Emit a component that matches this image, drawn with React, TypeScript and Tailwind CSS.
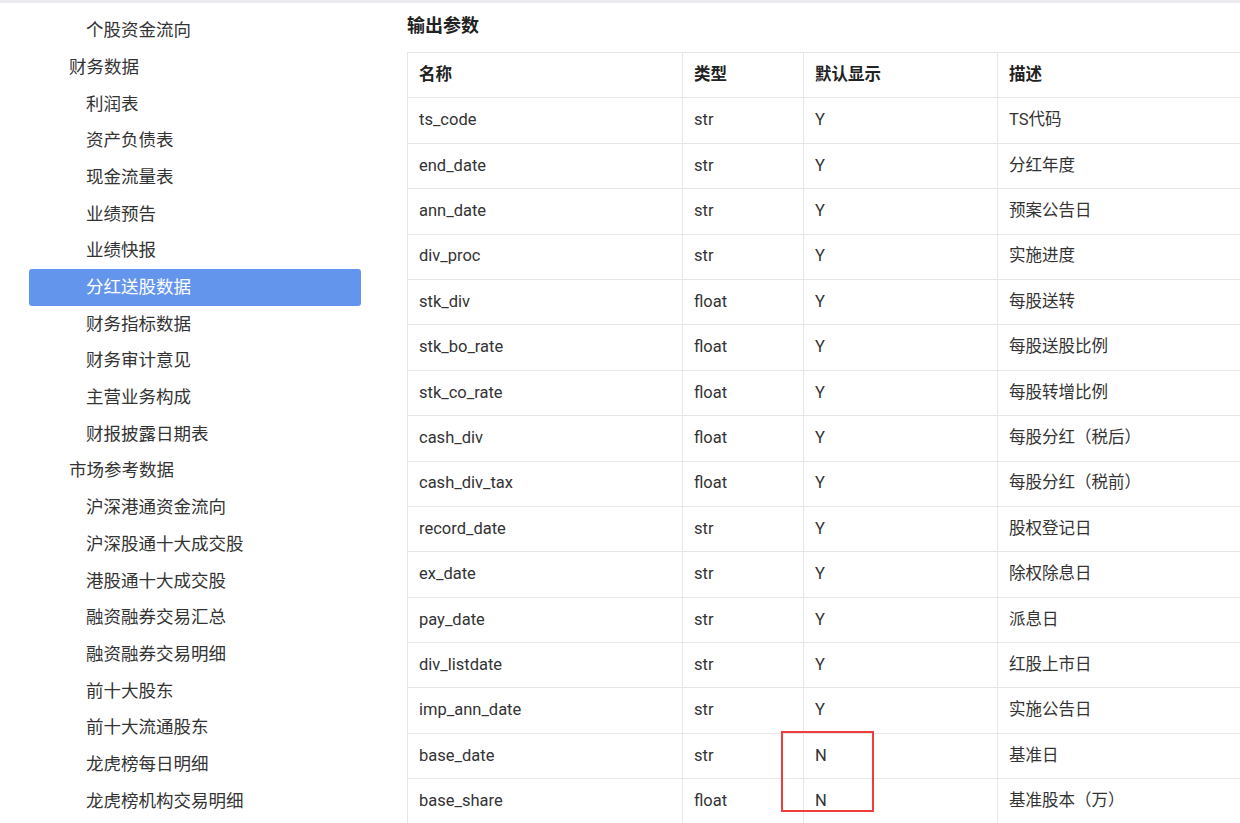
import React from "react";

type NavItem = { label: string; level: 1 | 2; active?: boolean };

const nav: NavItem[] = [
  { label: "个股资金流向", level: 2 },
  { label: "财务数据", level: 1 },
  { label: "利润表", level: 2 },
  { label: "资产负债表", level: 2 },
  { label: "现金流量表", level: 2 },
  { label: "业绩预告", level: 2 },
  { label: "业绩快报", level: 2 },
  { label: "分红送股数据", level: 2, active: true },
  { label: "财务指标数据", level: 2 },
  { label: "财务审计意见", level: 2 },
  { label: "主营业务构成", level: 2 },
  { label: "财报披露日期表", level: 2 },
  { label: "市场参考数据", level: 1 },
  { label: "沪深港通资金流向", level: 2 },
  { label: "沪深股通十大成交股", level: 2 },
  { label: "港股通十大成交股", level: 2 },
  { label: "融资融券交易汇总", level: 2 },
  { label: "融资融券交易明细", level: 2 },
  { label: "前十大股东", level: 2 },
  { label: "前十大流通股东", level: 2 },
  { label: "龙虎榜每日明细", level: 2 },
  { label: "龙虎榜机构交易明细", level: 2 },
];

const rows: [string, string, string, string][] = [
  ["ts_code", "str", "Y", "TS代码"],
  ["end_date", "str", "Y", "分红年度"],
  ["ann_date", "str", "Y", "预案公告日"],
  ["div_proc", "str", "Y", "实施进度"],
  ["stk_div", "float", "Y", "每股送转"],
  ["stk_bo_rate", "float", "Y", "每股送股比例"],
  ["stk_co_rate", "float", "Y", "每股转增比例"],
  ["cash_div", "float", "Y", "每股分红（税后）"],
  ["cash_div_tax", "float", "Y", "每股分红（税前）"],
  ["record_date", "str", "Y", "股权登记日"],
  ["ex_date", "str", "Y", "除权除息日"],
  ["pay_date", "str", "Y", "派息日"],
  ["div_listdate", "str", "Y", "红股上市日"],
  ["imp_ann_date", "str", "Y", "实施公告日"],
  ["base_date", "str", "N", "基准日"],
  ["base_share", "float", "N", "基准股本（万）"],
];

const font = { fontFamily: "Roboto, 'Noto Sans CJK SC', sans-serif" };

export default function App() {
  return (
    <div className="h-[823px] w-[1240px] overflow-hidden bg-white text-[#333]" style={font}>
      <div className="h-[3px] bg-[#ebebf0]" />
      <div className="flex">
        <aside className="w-[407px] shrink-0 pl-[29px] pt-[9px]">
          <ul className="w-[332px]">
            {nav.map((n) => (
              <li
                key={n.label}
                className={
                  "flex h-[36.7px] items-center rounded-[3px] text-[17.5px] " +
                  (n.level === 1 ? "pl-[40px] " : "pl-[57px] ") +
                  (n.active ? "bg-[#6495ed] text-white" : "text-[#333]")
                }
              >
                {n.label}
              </li>
            ))}
          </ul>
        </aside>
        <main className="min-w-0 flex-1">
          <h2 className="flex h-[49px] items-center pb-[5px] text-[18px] font-bold text-[#222]">输出参数</h2>
          <div className="relative">
            <table className="w-[900px] table-fixed border-collapse text-[16.5px]">
              <colgroup>
                <col className="w-[275px]" />
                <col className="w-[121px]" />
                <col className="w-[194px]" />
                <col />
              </colgroup>
              <thead>
                <tr className="h-[45.4px]">
                  {["名称", "类型", "默认显示", "描述"].map((h) => (
                    <th
                      key={h}
                      className="border border-[#e6e6e6] px-[11px] text-left text-[16.5px] font-bold text-[#222]"
                    >
                      {h}
                    </th>
                  ))}
                </tr>
              </thead>
              <tbody>
                {rows.map((r) => (
                  <tr key={r[0]} className="h-[45.4px]">
                    {r.map((c, i) => (
                      <td key={i} className="border border-[#e6e6e6] px-[11px] text-[#333]">
                        {c}
                      </td>
                    ))}
                  </tr>
                ))}
              </tbody>
            </table>
            <div className="absolute left-[374px] top-[679px] h-[81px] w-[93px] border-[2.5px] border-[#f03c3c]" />
          </div>
        </main>
      </div>
    </div>
  );
}
